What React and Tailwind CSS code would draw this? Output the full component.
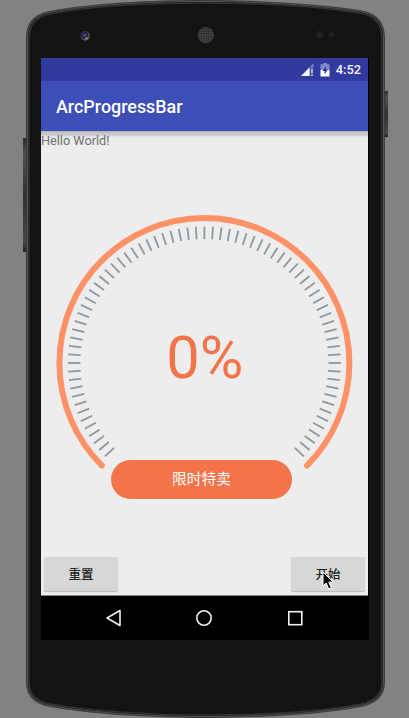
import React from "react";

const TICKS = Array.from({ length: 75 }, (_, i) => (i - 37) * 3.6);

function PhoneBody() {
  return (
    <svg className="absolute inset-0" width="409" height="718" viewBox="0 0 409 718">
      <defs>
        <pattern id="mesh" width="2.500" height="2.500" patternUnits="userSpaceOnUse">
          <rect width="2.500" height="2.500" fill="#474747" />
          <circle cx="1.250" cy="1.250" r="0.900" fill="#1b1b1b" />
        </pattern>
        <linearGradient id="key" x1="0" y1="0" x2="0" y2="1">
          <stop offset="0" stopColor="#2c2c2c" />
          <stop offset="0.15" stopColor="#505050" />
          <stop offset="0.5" stopColor="#303030" />
          <stop offset="0.92" stopColor="#484848" />
          <stop offset="1" stopColor="#1c1c1c" />
        </linearGradient>
      </defs>
      <rect x="23" y="138" width="4" height="114" fill="url(#key)" />
      <rect x="384" y="91" width="4" height="46" fill="url(#key)" />
      <path
        d="M26 38C26 22 34 14 50 11C90 3 150 0 204.500 0C260 0 320 4 360 10C377 13 385 22 385 38V682C385 696 376 704 361 707C320 715 260 718 204.500 718C150 718 90 714 50 707C34 704 26 696 26 682Z"
        fill="#3b3b3b"
      />
      <path
        d="M27.500 38C27.500 23 35 15.500 50 12.500C90 4.500 150 1.500 204.500 1.500C260 1.500 320 5.500 360 11.500C376 14.500 383.500 23 383.500 38V682C383.500 695 375 702.500 361 705.500C320 713.500 260 716.500 204.500 716.500C150 716.500 90 712.500 50 705.500C35 702.500 27.500 695 27.500 682Z"
        fill="#141414"
        stroke="#505050"
        strokeWidth="1"
      />
      <path
        d="M29 38C29 24 36 17 50 14C90 6 150 3 204.500 3C260 3 320 7 360 13C375 16 382 24 382 38V682C382 694 374 701 361 704C320 712 260 715 204.500 715C150 715 90 711 50 704C36 701 29 694 29 682Z"
        fill="#131313"
        stroke="#333"
        strokeWidth="1.500"
      />
      <circle cx="85.300" cy="36" r="4.700" fill="#555" />
      <circle cx="84.800" cy="35.300" r="3.700" fill="#24243a" />
      <circle cx="84.800" cy="35" r="1.600" fill="#4548a8" />
      <circle cx="86.500" cy="38.300" r="1.200" fill="#8c8c8c" />
      <circle cx="205.800" cy="35.200" r="8.200" fill="url(#mesh)" />
      <circle cx="319.700" cy="34.500" r="3.700" fill="#202020" />
      <circle cx="331.500" cy="34.500" r="2.500" fill="#202020" />
    </svg>
  );
}

function StatusBar() {
  return (
    <div className="flex h-[23px] w-[327px] items-center justify-end bg-[#303a9f] pt-px pr-[7px] text-[12.8px] font-medium text-[#f4f5fc]">
      <svg className="mr-[6px]" width="14" height="14" viewBox="0 0 14 14">
        <path d="M13.500 0V4.500H9.500Z" fill="#7d84c4" />
        <path d="M1 13L9.700 4.300V13Z" fill="#fff" />
        <path d="M11 5.500h1.900v4.700H11zM11 11.200h1.900V13H11z" fill="#b9bde2" />
      </svg>
      <svg className="mr-[6px]" width="10" height="14" viewBox="0 0 10 14">
        <path d="M3 0H7V1.300H9.500V7H.5V1.300H3Z" fill="#8389c5" />
        <path d="M.5 7H9.500V13.500H.5Z" fill="#fff" />
        <path d="M6 3L2.500 8H4.500V11.300L8 6.500H6Z" fill="#303a9f" />
      </svg>
      <span className="pt-px leading-none">4:52</span>
    </div>
  );
}

function Gauge() {
  return (
    <svg className="ml-[13px] block" width="300" height="260" viewBox="-150.400 -150 300 260">
      <path
        d="M-102.530 102.530A145 145 0 1 1 102.530 102.530"
        fill="none"
        stroke="#ff9167"
        strokeWidth="6"
        strokeLinecap="round"
      />
      {TICKS.map((a) => (
        <line
          key={a}
          x1="0"
          x2="0"
          y1="-136.500"
          y2="-124"
          transform={`rotate(${a})`}
          stroke="#8d979e"
          strokeWidth="1.800"
        />
      ))}
      <text
        x="0.300"
        y="14.600"
        textAnchor="middle"
        fill="#f4744a"
        fontSize="59.500"
        fontFamily="Roboto, sans-serif"
      >
        0%
      </text>
    </svg>
  );
}

function Button({ children }) {
  return (
    <button className="flex h-[34px] w-[74px] items-center justify-center rounded-[2px] bg-[#d6d8d7] pt-[2px] text-[12.5px] font-medium text-[#222] shadow-[0_1px_1px_#b8b8b8]">
      {children}
    </button>
  );
}

function NavBar() {
  return (
    <div className="flex h-[44px] w-[328px] items-center justify-between bg-black pr-[65px] pb-[1px] pl-[63px]">
      <svg width="18" height="18" viewBox="0 0 18 18" fill="none" stroke="#f2f2f2" strokeWidth="1.600">
        <path d="M16 1.500V16.500L3 9Z" strokeLinejoin="round" />
      </svg>
      <svg width="18" height="18" viewBox="0 0 18 18" fill="none" stroke="#f2f2f2" strokeWidth="1.600">
        <circle cx="9" cy="9" r="7.200" />
      </svg>
      <svg width="18" height="18" viewBox="0 0 18 18" fill="none" stroke="#f2f2f2" strokeWidth="1.600">
        <rect x="2.800" y="2.700" width="13" height="13" />
      </svg>
    </div>
  );
}

export default function App() {
  return (
    <div className="relative h-[718px] w-[409px] overflow-hidden bg-[#828282] pt-[58px] pl-[41px] font-[Roboto,'Noto_Sans_CJK_SC',sans-serif]">
      <PhoneBody />
      <div className="relative flex h-[582px] w-[328px] flex-col bg-black">
        <StatusBar />
        <header className="flex h-[50px] w-[327px] items-center bg-[#3e4eb8] pt-[2px] pl-[15px] text-[17.9px] font-medium text-white">
          ArcProgressBar
        </header>
        <main className="flex h-[465px] w-[327px] flex-col border-b border-[#888] bg-[#ededed]">
          <div className="h-[82px] bg-[linear-gradient(#9a9dab_0px,#c4c4c6_1px,#cacaca_4px,#dcdcdc_5px,#ededed_7px)] pt-[2px] text-[12.7px] leading-[15px] text-[#6d6d6d]">
            Hello World!
          </div>
          <Gauge />
          <div className="mt-[-13px] ml-[70px] flex h-[39px] w-[181px] items-center justify-center rounded-full bg-[#f4744a] pb-[1px] text-[14.7px] text-white">
            限时特卖
          </div>
          <div className="mt-auto flex justify-between px-[3px] pb-[4px]">
            <Button>重置</Button>
            <Button>开始</Button>
          </div>
        </main>
        <NavBar />
      </div>
      <svg className="absolute top-[571px] left-[322px]" width="12" height="20" viewBox="0 0 12 20">
        <path
          d="M1 1V15L4.200 12L6.700 18L9.300 16.800L6.800 11.200H11.200Z"
          fill="#080808"
          stroke="#fff"
          strokeWidth="1"
        />
      </svg>
    </div>
  );
}
